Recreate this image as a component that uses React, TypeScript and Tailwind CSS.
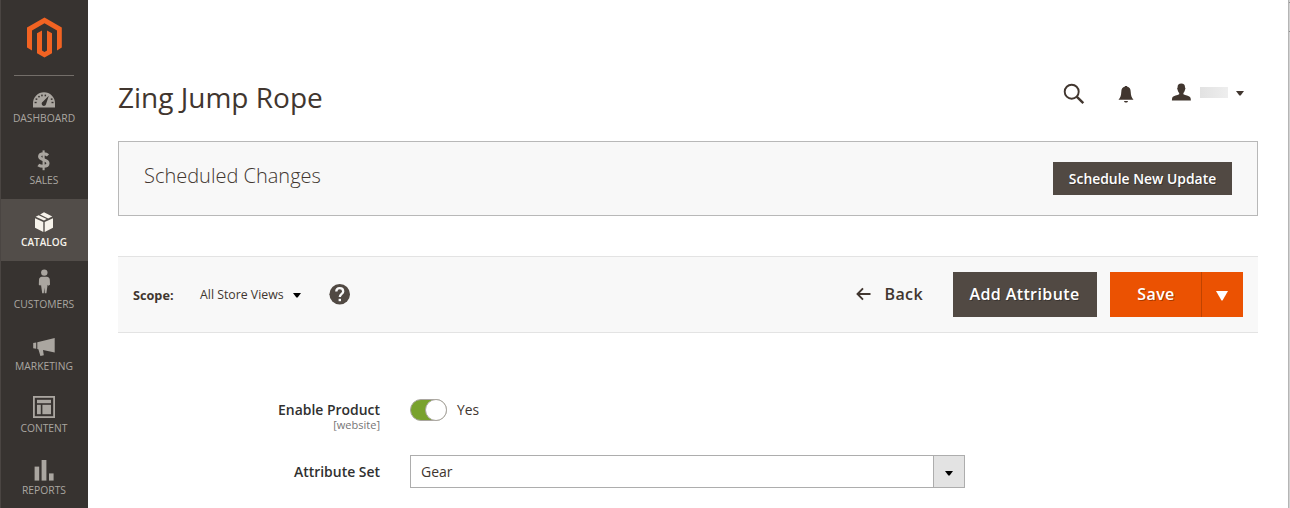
import type { ReactNode } from 'react';

const DashboardIcon = (
  <>
    <path d="M3 25.5V21.3a11 11 0 0 1 22 0V25.5Z" fill="currentColor" />
    <g fill="#373330">
      <rect x="4.6" y="19.8" width="2" height="1.4" />
      <rect x="5.6" y="16.4" width="1.7" height="1.5" />
      <rect x="8.2" y="13.9" width="1.6" height="1.5" />
      <rect x="11.2" y="12.6" width="1.5" height="1.7" />
      <rect x="14.6" y="12.6" width="1.5" height="1.7" />
      <rect x="20.8" y="16.4" width="1.7" height="1.5" />
      <rect x="21.5" y="19.8" width="2" height="1.4" />
      <path d="M18.8 13.8 16 22.2a2.2 2.2 0 1 1-3.2-2.4Z" />
    </g>
  </>
);

const BoxIcon = (
  <g fill="currentColor">
    <path d="M5 12.2 13.3 16V26L5 21.8Z" />
    <path d="M23 12.2 14.7 16V26L23 21.8Z" />
    <path d="M5.7 10.7 8.7 9.2 16.7 13 14 14.5Z" />
    <path d="M10.1 8.5 14 6.3 22.3 10.6 18.1 12.4Z" />
  </g>
);

const PersonIcon = (
  <g fill="currentColor">
    <circle cx="14.3" cy="4.6" r="3.2" />
    <path d="M11.8 8.7H16.8C18.6 8.7 19.7 10 19.8 11.8L20 16.7 18.4 17.8 17.6 16.8 16.4 25.2H14.8L14.3 19.5 13.8 25.2H12.2L11 16.8 10.2 17.8 8.8 16.7 9 11.8C9.1 10 10.2 8.7 11.8 8.7Z" />
  </g>
);

const MegaphoneIcon = (
  <g fill="currentColor">
    <path d="M3.2 13 6.2 12.4V18.8L3.2 18.2Z" />
    <path d="M7.3 12.2 24.7 8V22.6L13 20 13.8 25.2 10.4 26 8.4 19.2 7.3 18.9Z" />
  </g>
);

const LayoutIcon = (
  <>
    <rect x="3.9" y="4.9" width="20.2" height="20.2" fill="none" stroke="currentColor" strokeWidth="1.8" />
    <g fill="currentColor">
      <rect x="7" y="7.8" width="14" height="3.4" />
      <rect x="7" y="12.8" width="3.8" height="9.4" />
      <rect x="12.4" y="12.8" width="8.6" height="9.4" />
    </g>
  </>
);

const BarsIcon = (
  <g fill="currentColor">
    <rect x="4.6" y="12.6" width="4.6" height="14" />
    <rect x="11.6" y="6" width="4.8" height="20.6" />
    <rect x="19" y="19.4" width="4.6" height="7.2" />
  </g>
);

const DollarIcon = (
  <g fill="none" stroke="currentColor">
    <path d="M18 11.4C16.9 10.3 15.4 9.9 13.9 9.9 11.6 9.9 9.6 10.8 9.6 12.6 9.6 16.6 18 14.7 18 19.3 18 21.4 16.2 22.3 13.5 22.3 11.5 22.3 9.7 21.9 8.3 20.9" strokeWidth="3.1" />
    <path d="M13.6 6.4V26.2" strokeWidth="2.1" />
  </g>
);

const items: { label: string; icon: ReactNode; active?: boolean }[] = [
  { label: 'DASHBOARD', icon: DashboardIcon },
  { label: 'SALES', icon: DollarIcon },
  { label: 'CATALOG', icon: BoxIcon, active: true },
  { label: 'CUSTOMERS', icon: PersonIcon },
  { label: 'MARKETING', icon: MegaphoneIcon },
  { label: 'CONTENT', icon: LayoutIcon },
  { label: 'REPORTS', icon: BarsIcon },
];

function Sidebar() {
  return (
    <nav className="flex w-[88px] shrink-0 flex-col border-l border-[#4a4542] bg-[#373330]">
      <div className="flex h-[75px] shrink-0 justify-center pt-[17px] pr-px">
        <svg width="36" height="41" viewBox="0 0 36 41" fill="#f26322">
          <g transform="translate(0.5 0)">
            <path d="M18 0.5 35.3 10.5V30.5L30.5 33.4V13.4L18 6.2 5.5 13.4V33.4L0.5 30.5V10.5Z" />
            <path d="M10.5 16.2 15.5 13.4V33.4L18 34.9 20.5 33.4V13.4L25.5 16.2V36.3L18 40.6 10.5 36.3Z" />
          </g>
        </svg>
      </div>
      {items.map((it, i) => (
        <a
          key={it.label}
          className={`flex h-[62px] shrink-0 flex-col items-center pr-px ${
            it.active ? 'bg-[#524d49] text-[#f7f3eb]' : 'text-[#aaa6a0]'
          }`}
        >
          <span className={`h-px w-[60px] ${i === 0 ? 'bg-[#736e69]' : ''}`} />
          <svg className="mt-1.5" width="28" height="28" viewBox="0 0 28 28">
            {it.icon}
          </svg>
          <span className={`leading-4 ${it.active ? 'text-[10px] font-semibold' : 'text-[10.3px]'}`}>{it.label}</span>
        </a>
      ))}
    </nav>
  );
}

function Caret({ className = '' }: { className?: string }) {
  return (
    <svg className={className} width="8" height="5" viewBox="0 0 8 5" fill="currentColor">
      <path d="M0 0H8L4.6 4.6H3.4Z" />
    </svg>
  );
}

function Header() {
  return (
    <header className="flex h-[141px] items-start justify-between">
      <h1 className="mt-[77px] text-[28px] leading-10">Zing Jump Rope</h1>
      <div className="mt-[82px] mr-[14px] flex h-6 items-center">
        <svg width="22" height="22" viewBox="0 0 22 22" fill="none" stroke="currentColor">
          <circle cx="8.7" cy="8.7" r="7" strokeWidth="1.9" />
          <path d="M13.7 13.7 20.3 20.1" strokeWidth="2.5" />
        </svg>
        <svg className="ml-[33px]" width="16" height="18" viewBox="0 0 16 18" fill="currentColor">
          <path d="M7 1.6V0.9H9V1.6C11.6 2.1 12.6 4.2 12.7 6.7 12.9 10.6 13.4 12 15.5 14.8H0.5C2.6 12 3.1 10.6 3.3 6.7 3.4 4.2 4.4 2.1 7 1.6Z" />
          <path d="M6 16H10C9.8 17 9 17.5 8 17.5S6.2 17 6 16Z" />
        </svg>
        <svg className="ml-[37px] -mt-1" width="20" height="18" viewBox="0 0 20 18" fill="currentColor">
          <path d="M10.3 0.4C12.8 0.4 14.2 1.9 14 4.4L14.5 5.2 13.8 7.4C13.5 8.6 13 9.3 12.4 9.9V11.2C14.3 12.3 17.9 12.6 19 13.9 19.7 14.7 19.8 16 19.9 17.6H0.9C1 16 1.1 14.7 1.6 13.9 2.7 12.6 6.3 12.3 8.2 11.2V9.9C7.6 9.3 7.1 8.6 6.8 7.4L6.1 5.2 6.6 4.4C6.4 1.9 7.8 0.4 10.3 0.4Z" />
        </svg>
        <span className="ml-[9px] -mt-[3px] h-[11px] w-7 bg-gradient-to-r from-[#e2e2e2] to-[#eeeeee]" />
        <Caret className="-mt-px ml-2" />
      </div>
    </header>
  );
}

function Toolbar() {
  return (
    <section className="mt-10 flex h-[77px] shrink-0 items-center border-y border-[#e3e3e3] bg-[#f8f8f8] pr-[15px] pl-[15px]">
      <span className="w-[67px] pt-0.5 text-[12.7px] font-bold">Scope:</span>
      <button className="flex items-center text-[12.3px] text-[#41362f]">
        <span className="w-[93px] pt-0.5 text-left">All Store Views</span>
        <Caret className="mt-0.5 text-black" />
      </button>
      <svg className="ml-[28px]" width="22" height="22" viewBox="0 0 22 22">
        <circle cx="10.7" cy="10.3" r="10.3" fill="#514943" />
        <path d="M7.3 7.6C7.3 5.5 8.7 4.2 10.7 4.2S14.2 5.5 14.2 7.4C14.2 9.9 10.8 10 10.8 13.1" fill="none" stroke="#f8f8f8" strokeWidth="2.3" />
        <rect x="9.6" y="14.8" width="2.4" height="2.4" fill="#f8f8f8" />
      </svg>
      <div className="ml-auto flex h-[45px] items-center text-base font-semibold tracking-[0.4px]">
        <button className="mr-[30px] mb-0.5 flex items-center">
          <svg className="mr-[13px]" width="15" height="14" viewBox="0 0 15 14" fill="none" stroke="currentColor" strokeWidth="1.9">
            <path d="M14.5 7H1.5M7 1.3 1.5 7 7 12.7" />
          </svg>
          Back
        </button>
        <button className="mr-[13px] h-full w-36 bg-[#514943] pr-px pb-0.5 text-white [text-shadow:1px_1px_0_rgba(0,0,0,0.3)]">
          Add Attribute
        </button>
        <button className="h-full w-[91px] bg-[#eb5202] pb-0.5 pl-px text-white [text-shadow:1px_1px_0_rgba(0,0,0,0.3)]">Save</button>
        <button className="flex h-full w-[42px] items-center justify-center border-l border-[#c04300] bg-[#eb5202] pr-px text-white">
          <svg className="mt-[3px]" width="12" height="10" viewBox="0 0 12 10" fill="currentColor">
            <path d="M0 0H12L6.5 9.5H5.5Z" />
          </svg>
        </button>
      </div>
    </section>
  );
}

function ProductForm() {
  return (
    <div className="mt-[66px] text-sm text-[#303030]">
      <div className="flex h-[35px]">
        <div className="w-[262px] text-right">
          <div className="text-[13.95px] leading-[22px] font-semibold">Enable Product</div>
          <div className="-mt-[3px] text-[11px] leading-[14px] text-[#757575]">[website]</div>
        </div>
        <div className="ml-[30px] flex h-[22px] items-center">
          <span className="flex h-[22px] w-[37px] items-center justify-end rounded-full border border-[#aaa6a0] bg-[#79a22e]">
            <span className="-mr-px h-[22px] w-[22px] rounded-full border border-[#aaa6a0] bg-white" />
          </span>
          <span className="ml-[10px] text-[13.8px] text-[#41362f]">Yes</span>
        </div>
      </div>
      <div className="mt-[21px] flex items-center">
        <div className="w-[262px] text-right text-[13.95px] font-semibold">Attribute Set</div>
        <div className="ml-[30px] flex h-[33px] w-[555px] border border-[#adadad]">
          <span className="flex flex-1 items-center pl-[10px] text-[14px] text-[#41362f]">Gear</span>
          <span className="flex w-[31px] items-center justify-center border-l border-[#adadad] bg-[#e3e3e3] text-black">
            <Caret className="mt-[3px]" />
          </span>
        </div>
      </div>
    </div>
  );
}

export default function App() {
  return (
    <div className="flex h-[508px] w-[1290px] overflow-hidden bg-white font-['Open_Sans','Noto_Sans',sans-serif] text-[#41362f]">
      <Sidebar />
      <main className="flex min-w-0 flex-1 flex-col pr-[30px] pl-[30px]">
        <Header />
        <section className="flex h-[75px] shrink-0 items-start justify-between border border-[#b8b8b8] bg-[#f8f8f8] pr-[25px] pl-[25px]">
          <h2 className="mt-5 text-[20px] leading-7 font-light">Scheduled Changes</h2>
          <button className="mt-5 h-[33px] w-[179px] bg-[#514943] pt-0.5 text-[13.9px] font-semibold text-white [text-shadow:1px_1px_0_rgba(0,0,0,0.3)]">
            Schedule New Update
          </button>
        </section>
        <Toolbar />
        <ProductForm />
      </main>
      <aside className="flex w-0.5 shrink-0 flex-col border-l border-[#b5b5b5] bg-[#d2d2d2]">
        <span className="mt-0.5 h-px bg-[#909090]" />
        <span className="mt-[28px] h-px bg-[#909090]" />
      </aside>
    </div>
  );
}
